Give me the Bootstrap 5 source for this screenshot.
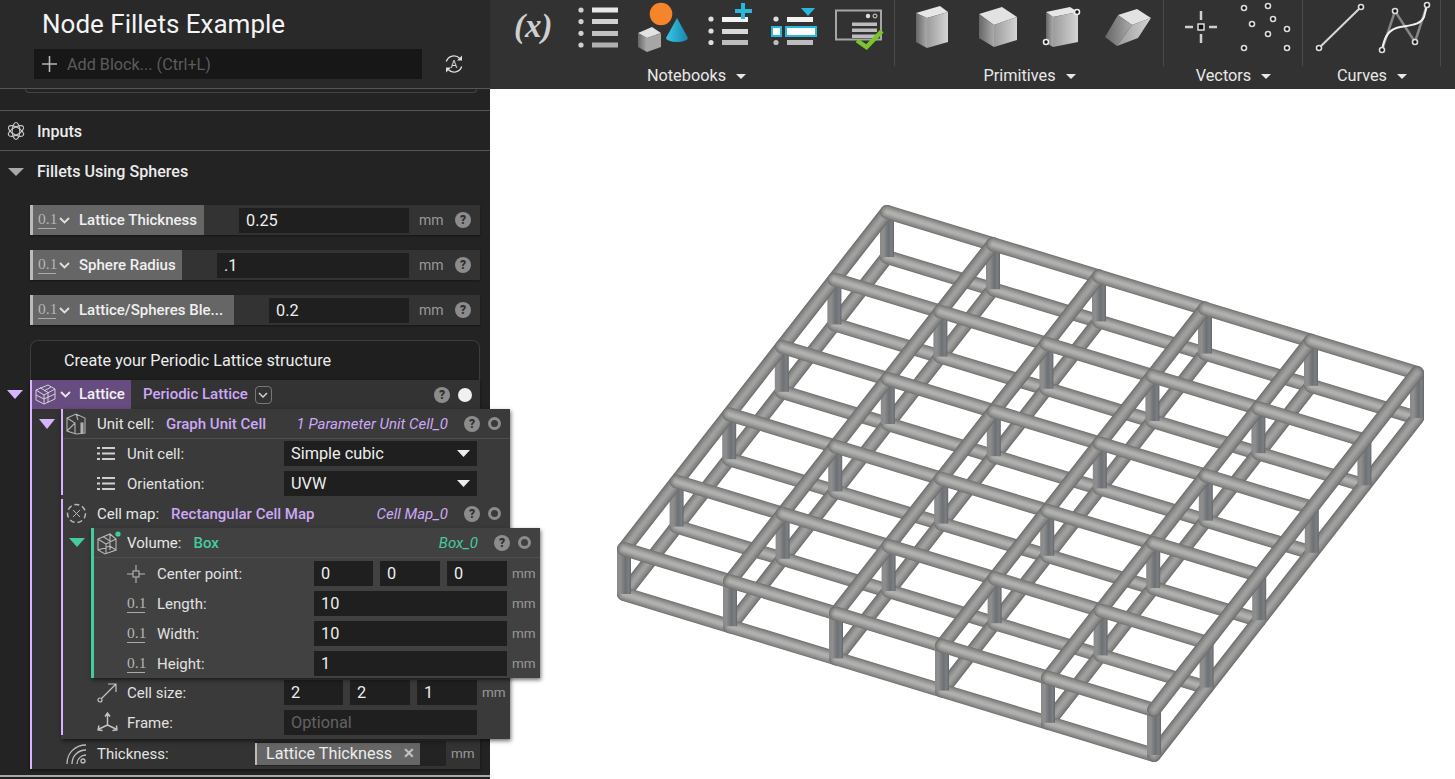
<!DOCTYPE html>
<html lang="en">
<head>
<meta charset="utf-8">
<title>Node Fillets Example</title>
<link href="https://cdn.jsdelivr.net/npm/bootstrap@5.3.0/dist/css/bootstrap.min.css" rel="stylesheet">
<style>
html,body{margin:0;height:100%;overflow:hidden;background:#fff}
body{font-family:Roboto,"Liberation Sans",sans-serif;font-size:15px;color:#e4e4e4}
svg{display:block;flex:none}
.shell{width:1455px;height:779px;overflow:hidden}
.lp{width:490px;height:779px;flex:none;background:#232323;position:relative;z-index:2}
.lp-top{height:88px;background:#292929;padding-left:34px}
.ttl{font-size:26px;line-height:30px;padding:9px 0 0 8px;margin:0;font-weight:400;color:#f4f4f4;height:49px}
.addrow{height:30px}
.addbox{width:388px;height:30px;background:#171717;color:#5c5c5c;font-size:16.2px;padding-left:8px;gap:10px}
.addtxt{padding-top:2px}
.aic{margin-left:22px}
.rulehead{height:4px;width:452px;margin-left:25px;border:1px solid #444;border-top:0;border-radius:0 0 7px 7px}
.rule{border-top:1px solid #555}
.r110{margin-top:17px}
.sec{height:39px;padding-left:7px;gap:12px;font-weight:500;color:#ececec;font-size:16.1px}
.sectxt{padding-top:4px}
.sec2{height:41px;padding-left:8px;gap:13px;font-weight:500;color:#ececec;font-size:16.1px}
.sec2txt{padding-top:1px}
.prow{margin-left:30px;width:450px;height:30px;background:#333;margin-bottom:15px;box-shadow:0 1px 2px rgba(0,0,0,.4)}
.first{margin-top:13px}
.chip{height:30px;background:#666;border-left:3px solid #bbb;padding:0 0 0 5px;font-weight:500;color:#f0f0f0;font-size:15px;white-space:nowrap;flex:none}
.cw174{width:174px}
.cw152{width:152px}
.cw204{width:204px}
.chiptxt{padding-top:1px}
.ozero{font-family:"Liberation Serif",serif;font-size:15.500px;line-height:16px;color:#b5b5b5;border-bottom:1px solid #aaa;width:18px;text-align:center;flex:none;padding-bottom:1px}
.chev{margin:0 5px 0 3px}
.fld{height:25px;background:#1f1f1f;color:#eee;padding-left:7px;font-size:16.3px;line-height:26px;flex:none}
.grow1{flex:1 1 0;margin-left:35px}
.mmtail{width:71px;flex:none;padding-left:10px;color:#999;font-size:14px;justify-content:space-between;padding-right:9px}
.qm{width:16px;height:16px;border-radius:50%;background:#8c8c8c;color:#2f2f2f;font-weight:900;font-size:12px;line-height:16px;text-align:center;flex:none}
.ring{width:13px;height:13px;border-radius:50%;border:3px solid #8c8c8c;flex:none}
.wdot{width:14px;height:14px;border-radius:50%;background:#f0f0f0;flex:none}
.noteb{margin-left:30px;width:450px;height:40px;background:#1f1f1f;border:1px solid #3c3c3c;border-bottom:0;border-radius:8px 8px 0 0;padding-left:33px;font-size:16.200px;color:#ededed;line-height:39px}
.nest{display:flex;align-items:flex-start}
.gut30{width:30px;flex:none;height:29px}
.gut29{width:29px;flex:none;height:29px}
.gut28{width:28px;flex:none;height:29px}
.latt{width:450px;height:389px;background:#333;border-left:2px solid #d8b4fe;box-shadow:0 1px 3px rgba(0,0,0,.5);flex:none}
.lhead{height:29px;padding-right:8px}
.lchip{height:29px;width:99px;background:#674c7f;padding-left:3px;font-weight:500;color:#f2f2f2;font-size:15px;flex:none}
.lilac{color:#cda8f6}
.mint{color:#45cc9d}
.pname{font-weight:500}
.iname{font-style:italic}
.pnudge{padding-top:2px}
.minibtn{width:17px;height:18px;border:1px solid #777;border-radius:4px;margin-left:7px}
.pnl{width:449px;flex:none;background:#3a3a3a;box-shadow:1px 2px 4px rgba(0,0,0,.55);position:relative;padding-bottom:4px}
.usec{height:86px;border-left:2px solid #d8b4fe;margin-bottom:4px}
.csec{height:236px;border-left:2px solid #d8b4fe}
.phead{height:29px;padding:0 9px 0 3px}
.hline{border-bottom:1px solid #4e4e4e;height:30px}
.hlab{margin-left:10px;color:#e6e6e6;padding-top:2px}
.hlab6{margin-left:6px}
.vol{background:#414141;padding-bottom:0}
.vsec{border-left:3px solid #45cc9d;height:150px}
.frow{height:25px;margin-top:5px;color:#e2e2e2}
.f1{margin-top:2px}
.f2{margin-top:3px}
.f3{margin-top:2px}
.pl34{padding-left:34px}
.pl33{padding-left:33px}
.ic30{width:30px;flex:none}
.ic31{width:31px;flex:none}
.lb157{width:157px;flex:none;padding-top:2px}
.w193{width:193px}
.w59{width:59px}
.w60{width:60px}
.gap7{gap:7px}
.mmx{color:#999;font-size:13.5px;margin-left:5px}
.dim{color:#626262}
.sel{justify-content:space-between;padding-right:7px}
.seltxt{padding-top:1px}
.thk{height:25px;margin-top:2px;padding-left:34px;color:#e2e2e2}
.lbthk{width:158px;flex:none;padding-top:2px}
.tk{width:191px;height:25px;background:#232323;flex:none}
.tchip{width:165px;height:22px;background:#666;border-left:2px solid #bbb;padding:0 5px 0 9px;color:#ececec;font-size:16.200px;justify-content:space-between}
.tchiptxt{padding-top:2px}
.xmark{color:#c4c4c4;font-weight:900;font-size:14px}
.lfoot{margin-top:6px;height:2px;background:#aaa}
.rp{min-width:0}
.tb{height:89px;background:#323232;color:#e8e8e8;flex:none}
.tg{height:89px;flex:none}
.tg1{width:405px}
.tg2{width:269px}
.tg3{width:139px}
.tg4{width:138px}
.ticons{height:66px;border-right:1px solid #4a4a4a}
.p15{padding-left:15px}
.p13{padding-left:13px}
.p11{padding-left:11px}
.p5{padding-left:5px}
.tlab{height:20px;font-size:16.300px;gap:10px;line-height:20px}
.nudge{margin-left:8px}
.view{background:#fff;flex:1 1 0}
.ftxt{font-family:"Liberation Serif",serif;font-style:italic;font-weight:700;font-size:33px}
.atxt{font-size:10.500px;font-family:Roboto,sans-serif}
</style>
</head>
<body>
<div class="shell d-flex">
  <aside class="lp">
    <div class="lp-top">
      <h1 class="ttl">Node Fillets Example</h1>
      <div class="addrow d-flex align-items-center">
        <div class="addbox d-flex align-items-center">
          <svg width="15" height="16" viewBox="0 0 15 16"><path d="M7.5 0v16M0 8h15" stroke="#b5b5b5" stroke-width="1.6"/></svg>
          <span class="addtxt">Add Block... (Ctrl+L)</span>
        </div>
        <svg class="aic" width="20" height="20" viewBox="0 0 20 20" fill="none" stroke="#dcdcdc" stroke-width="1.300"><path d="M2.300 7.500A8 8 0 0 1 15.800 4.500M17.700 12.500A8 8 0 0 1 4.200 15.500"/><path d="M18 1.500v5h-5zM2 18.500v-5h5z" fill="#dcdcdc" stroke="none"/><text x="10" y="13.800" text-anchor="middle" class="atxt" fill="#dcdcdc" stroke="none">A</text></svg>
      </div>
    </div>
    <div class="rule"></div>
    <div class="rulehead"></div>
    <div class="rule r110"></div>
    <div class="sec d-flex align-items-center">
      <svg width="18" height="20" viewBox="0 0 18 20" fill="none" stroke="#c8c8c8" stroke-width="1.1"><ellipse cx="9" cy="10" rx="8.500" ry="3.800" transform="rotate(30 9 10)"/><ellipse cx="9" cy="10" rx="8.500" ry="3.800" transform="rotate(90 9 10)"/><ellipse cx="9" cy="10" rx="8.500" ry="3.800" transform="rotate(150 9 10)"/></svg>
      <span class="sectxt">Inputs</span>
    </div>
    <div class="rule"></div>
    <div class="sec2 d-flex align-items-center">
      <svg width="16" height="8" viewBox="0 0 16 8"><path d="M0 0h16L8 8z" fill="#a9a9a9"/></svg>
      <span class="sec2txt">Fillets Using Spheres</span>
    </div>
    <div class="prow first d-flex align-items-center">
      <div class="chip cw174 d-flex align-items-center"><span class="ozero">0.1</span><svg class="chev" width="11" height="7" viewBox="0 0 11 7"><path d="M1 1l4.500 4.500L10 1" fill="none" stroke="#e0e0e0" stroke-width="1.800"/></svg><span class="ps-1 chiptxt">Lattice Thickness</span></div>
      <div class="fld grow1">0.25</div>
      <div class="mmtail d-flex align-items-center"><span>mm</span><span class="qm">?</span></div>
    </div>
    <div class="prow d-flex align-items-center">
      <div class="chip cw152 d-flex align-items-center"><span class="ozero">0.1</span><svg class="chev" width="11" height="7" viewBox="0 0 11 7"><path d="M1 1l4.500 4.500L10 1" fill="none" stroke="#e0e0e0" stroke-width="1.800"/></svg><span class="ps-1 chiptxt">Sphere Radius</span></div>
      <div class="fld grow1">.1</div>
      <div class="mmtail d-flex align-items-center"><span>mm</span><span class="qm">?</span></div>
    </div>
    <div class="prow d-flex align-items-center">
      <div class="chip cw204 d-flex align-items-center"><span class="ozero">0.1</span><svg class="chev" width="11" height="7" viewBox="0 0 11 7"><path d="M1 1l4.500 4.500L10 1" fill="none" stroke="#e0e0e0" stroke-width="1.800"/></svg><span class="ps-1 chiptxt">Lattice/Spheres Ble...</span></div>
      <div class="fld grow1">0.2</div>
      <div class="mmtail d-flex align-items-center"><span>mm</span><span class="qm">?</span></div>
    </div>
    <div class="noteb">Create your Periodic Lattice structure</div>
    <div class="nest">
      <div class="gut30 d-flex align-items-center justify-content-center"><svg width="16" height="9" viewBox="0 0 16 9"><path d="M0 0h16L8 9z" fill="#d8b4fe"/></svg></div>
      <div class="latt">
        <div class="lhead d-flex align-items-center">
          <div class="lchip d-flex align-items-center">
            <svg width="21" height="21" viewBox="0 0 21 21" fill="none" stroke="#d6d0dc" stroke-width="1"><path d="M1 6 13 1l7 4v10l-11 5-8-4zM1 6l8 5 11-6M9 11v9M5 3.500l8 5v10M16 3l-7 4M1 11l8 4 11-5"/></svg>
            <svg class="ms-1" width="11" height="7" viewBox="0 0 11 7"><path d="M1 1l4.500 4.500L10 1" fill="none" stroke="#e8e8e8" stroke-width="1.800"/></svg>
            <span class="ms-2">Lattice</span>
          </div>
          <span class="lilac pname ms-2 ps-1">Periodic Lattice</span>
          <div class="minibtn d-flex align-items-center justify-content-center"><svg width="10" height="6" viewBox="0 0 10 6"><path d="M1 1l4 4 4-4" fill="none" stroke="#d0d0d0" stroke-width="1.500"/></svg></div>
          <span class="qm ms-auto">?</span>
          <span class="wdot ms-2"></span>
        </div>
        <div class="nest">
          <div class="gut29 d-flex align-items-center justify-content-center"><svg width="16" height="10" viewBox="0 0 16 10"><path d="M0 0h16L8 10z" fill="#d8b4fe"/></svg></div>
          <div class="pnl">
            <div class="usec">
              <div class="phead hline d-flex align-items-center">
                <svg width="21" height="22" viewBox="0 0 21 22" fill="none" stroke="#b0b0b0" stroke-width="1.100"><path d="M1 5l9-4 9 4v15l-9 1-9-3zM1 5l8 5v11M10 1l2 6M1 18l8-8"/><path d="M15 10h2v10h-2z" fill="#b0b0b0"/></svg>
                <span class="hlab">Unit cell:</span>
                <span class="lilac pname pnudge ms-2 ps-1">Graph Unit Cell</span>
                <span class="lilac iname pnudge ms-auto">1 Parameter Unit Cell_0</span>
                <span class="qm ms-3">?</span>
                <span class="ring ms-2"></span>
              </div>
              <div class="frow f1 d-flex align-items-center pl34">
                <div class="ic30"><svg width="18" height="13" viewBox="0 0 18 13" fill="#cfcfcf"><path d="M0 0h3v2H0zM5 0h13v2H5zM0 5.500h3v2H0zM5 5.500h13v2H5zM0 11h3v2H0zM5 11h13v2H5z"/></svg></div>
                <div class="lb157">Unit cell:</div>
                <div class="fld w193 d-flex align-items-center sel"><span class="seltxt">Simple cubic</span><svg width="13" height="7" viewBox="0 0 13 7"><path d="M0 0h13L6.500 7z" fill="#eee"/></svg></div>
              </div>
              <div class="frow d-flex align-items-center pl34">
                <div class="ic30"><svg width="18" height="13" viewBox="0 0 18 13" fill="#cfcfcf"><path d="M0 0h3v2H0zM5 0h13v2H5zM0 5.500h3v2H0zM5 5.500h13v2H5zM0 11h3v2H0zM5 11h13v2H5z"/></svg></div>
                <div class="lb157">Orientation:</div>
                <div class="fld w193 d-flex align-items-center sel"><span class="seltxt">UVW</span><svg width="13" height="7" viewBox="0 0 13 7"><path d="M0 0h13L6.500 7z" fill="#eee"/></svg></div>
              </div>
            </div>
            <div class="csec">
              <div class="phead d-flex align-items-center">
                <svg width="21" height="21" viewBox="0 0 21 21" fill="none" stroke="#b8b8b8" stroke-width="1.500" stroke-dasharray="5 3"><circle cx="10.500" cy="10.500" r="9"/><path d="M7 7l7 7M14 7l-7 7" stroke-dasharray="none" stroke-width="1"/></svg>
                <span class="hlab">Cell map:</span>
                <span class="lilac pname pnudge ms-2 ps-1">Rectangular Cell Map</span>
                <span class="lilac iname pnudge ms-auto">Cell Map_0</span>
                <span class="qm ms-3">?</span>
                <span class="ring ms-2"></span>
              </div>
              <div class="nest">
                <div class="gut28 d-flex align-items-center justify-content-center"><svg width="16" height="9" viewBox="0 0 16 9"><path d="M0 0h16L8 9z" fill="#45cc9d"/></svg></div>
                <div class="pnl vol">
                  <div class="vsec">
                    <div class="phead hline d-flex align-items-center">
                      <svg width="24" height="24" viewBox="0 0 24 24" fill="none" stroke="#b8b8b8" stroke-width="1.100"><path d="M1 8l12-5 6 5v11l-11 4-7-4zM1 8l8 5v10M9 13l10-5M6 5.500l7 4.500v9M13 3v9M1 19l12-4 6 4"/><circle cx="21" cy="3" r="2.600" fill="#45cc9d" stroke="none"/></svg>
                      <span class="hlab hlab6">Volume:</span>
                      <span class="mint pname pnudge ms-2 ps-1">Box</span>
                      <span class="mint iname pnudge ms-auto">Box_0</span>
                      <span class="qm ms-3">?</span>
                      <span class="ring ms-2"></span>
                    </div>
                    <div class="frow f2 d-flex align-items-center pl33">
                      <div class="ic30"><svg width="18" height="18" viewBox="0 0 18 18" fill="none" stroke="#b5b5b5" stroke-width="1.100"><path d="M0 9h6M12 9h6M9 0v6M9 12v6"/><rect x="6" y="6" width="6" height="6"/></svg></div>
                      <div class="lb157">Center point:</div>
                      <div class="d-flex gap7"><div class="fld w59">0</div><div class="fld w60">0</div><div class="fld w60">0</div></div>
                      <span class="mmx">mm</span>
                    </div>
                    <div class="frow d-flex align-items-center pl33">
                      <div class="ic30"><span class="ozero d-block">0.1</span></div>
                      <div class="lb157">Length:</div>
                      <div class="fld w193">10</div>
                      <span class="mmx">mm</span>
                    </div>
                    <div class="frow d-flex align-items-center pl33">
                      <div class="ic30"><span class="ozero d-block">0.1</span></div>
                      <div class="lb157">Width:</div>
                      <div class="fld w193">10</div>
                      <span class="mmx">mm</span>
                    </div>
                    <div class="frow d-flex align-items-center pl33">
                      <div class="ic30"><span class="ozero d-block">0.1</span></div>
                      <div class="lb157">Height:</div>
                      <div class="fld w193">1</div>
                      <span class="mmx">mm</span>
                    </div>
                  </div>
                </div>
              </div>
              <div class="frow f3 d-flex align-items-center pl34">
                <div class="ic30"><svg width="20" height="20" viewBox="0 0 20 20" fill="none" stroke="#c4c4c4" stroke-width="1.200"><circle cx="3" cy="17" r="2"/><path d="M4.500 15.500 19 1M11 1h8v8"/></svg></div>
                <div class="lb157">Cell size:</div>
                <div class="d-flex gap7"><div class="fld w59">2</div><div class="fld w60">2</div><div class="fld w60">1</div></div>
                <span class="mmx">mm</span>
              </div>
              <div class="frow d-flex align-items-center pl34">
                <div class="ic30"><svg width="21" height="21" viewBox="0 0 21 21" fill="none" stroke="#c4c4c4" stroke-width="1.400"><path d="M10.500 13V2M10.500 13 2 17M10.500 13 19 17M8 4.500 10.500 1 13 4.500M2 13.500 1 18l4.500.5M19.500 13.500l.5 4.500-4.500.5"/></svg></div>
                <div class="lb157">Frame:</div>
                <div class="fld w193 dim">Optional</div>
              </div>
            </div>
          </div>
        </div>
        <div class="thk d-flex align-items-center">
          <div class="ic31 d-flex"><svg width="21" height="21" viewBox="0 0 21 21" fill="none" stroke="#bdbdbd" stroke-width="1.300"><path d="M1 21C1 10 9 2 20 2M6 21C6 13 12 7 20 7M11 21c0-5 4-9 9-9"/><circle cx="17" cy="18" r="2"/></svg></div>
          <div class="lbthk">Thickness:</div>
          <div class="tk d-flex align-items-center"><div class="tchip d-flex align-items-center"><span class="tchiptxt">Lattice Thickness</span><span class="xmark">✕</span></div></div>
          <span class="mmx">mm</span>
        </div>
      </div>
    </div>
    <div class="lfoot"></div>
  </aside>
  <div class="rp flex-grow-1 d-flex flex-column">
    <div class="tb d-flex">
      <section class="tg tg1 d-flex flex-column">
        <div class="ticons d-flex p15">
          <svg width="60" height="54" viewBox="505 0 60 54"><text x="514" y="37" class="ftxt" fill="#cfcfcf">(x)</text></svg>
          <svg width="63" height="54" viewBox="565 0 63 54"><g fill="#d0d0d0"><circle cx="581" cy="10" r="2.600"/><circle cx="581" cy="21.600" r="2.600"/><circle cx="581" cy="33.300" r="2.600"/><circle cx="581" cy="45" r="2.600"/></g><rect x="592" y="7.500" width="26" height="5" fill="#e8e8e8"/><rect x="592" y="19" width="26" height="5" fill="#d2d2d2"/><rect x="592" y="31" width="26" height="5" fill="#c0c0c0"/><rect x="592" y="42.500" width="26" height="5" fill="#b0b0b0"/></svg>
          <svg width="70" height="54" viewBox="628 0 70 54"><defs><linearGradient id="cone" x1="0" x2="1"><stop offset="0" stop-color="#38c8ea"/><stop offset="1" stop-color="#1a84aa"/></linearGradient><linearGradient id="gl" x1="0" x2="1"><stop offset="0" stop-color="#666"/><stop offset="1" stop-color="#aaa"/></linearGradient><linearGradient id="gr" x1="0" x2="1"><stop offset="0" stop-color="#9c9c9c"/><stop offset="1" stop-color="#d4d4d4"/></linearGradient></defs><circle cx="661" cy="14" r="11.300" fill="#f5842a"/><path d="M677 18 666 38a11 4 0 0 0 22 0z" fill="url(#cone)"/><path d="M638 33 652 27 661 33 647 38z" fill="#e2e2e2"/><path d="M638 33 647 38V52L638 47z" fill="url(#gl)"/><path d="M647 38 661 33V47L647 52z" fill="#a6a6a6"/></svg>
          <svg width="64" height="54" viewBox="698 0 64 54"><g fill="#dedede"><circle cx="711" cy="19" r="2.600"/><circle cx="711" cy="31" r="2.600"/><circle cx="711" cy="42.500" r="2.600"/></g><rect x="722" y="17" width="26" height="5" fill="#f2f2f2"/><rect x="722" y="29" width="26" height="5" fill="#d8d8d8"/><rect x="722" y="40" width="26" height="5" fill="#bdbdbd"/><path d="M741 3h4v6h7v4h-7v6h-4v-6h-6v-4h6z" fill="#28b8dc"/></svg>
          <svg width="64" height="54" viewBox="762 0 64 54"><path d="M801 8h14l-7 8z" fill="#28b8dc"/><circle cx="776" cy="19" r="2.600" fill="#dedede"/><circle cx="776" cy="42.500" r="2.600" fill="#bdbdbd"/><rect x="787" y="17" width="26" height="5" fill="#f2f2f2"/><rect x="787" y="40" width="26" height="5" fill="#bdbdbd"/><rect x="772" y="27" width="9" height="9" fill="#fff" stroke="#28b8dc" stroke-width="2"/><rect x="786" y="27" width="30" height="9" fill="#fff" stroke="#28b8dc" stroke-width="2"/></svg>
          <svg width="64" height="54" viewBox="826 0 64 54"><rect x="836" y="10.500" width="45" height="29" fill="none" stroke="#a6a6a6" stroke-width="2"/><circle cx="868" cy="16" r="2.200" fill="#ddd"/><circle cx="875" cy="16" r="2" fill="none" stroke="#ddd"/><g fill="#bcbcbc"><rect x="852" y="22.500" width="25" height="3.500"/><rect x="852" y="28.500" width="25" height="3.500"/><rect x="852" y="34.500" width="25" height="3.500"/></g><path d="M857 40.500 866.500 47 882 31" fill="none" stroke="#7cc42c" stroke-width="4.500"/></svg>
        </div>
        <div class="tlab d-flex align-items-center justify-content-center nudge"><span>Notebooks</span><svg width="10" height="5" viewBox="0 0 10 5"><path d="M0 0h10L5 5z" fill="#e8e8e8"/></svg></div>
      </section>
      <section class="tg tg2 d-flex flex-column">
        <div class="ticons d-flex p13">
          <svg width="60" height="54" viewBox="908 0 60 54"><path d="M916 13 940 6 948 12 927 18z" fill="#e6e6e6"/><path d="M916 13 927 18V48L916 42z" fill="url(#gl)"/><path d="M927 18 948 12V42L927 48z" fill="url(#gr)"/></svg>
          <svg width="62" height="54" viewBox="968 0 62 54"><path d="M979 14 1002 7 1017 17 994 25z" fill="#e2e2e2"/><path d="M979 14 994 25V47L979 38z" fill="url(#gl)"/><path d="M994 25 1017 17V40L994 47z" fill="url(#gr)"/></svg>
          <svg width="62" height="54" viewBox="1030 0 62 54"><path d="M1046 12 1070 7 1078 12 1053 17z" fill="#e6e6e6"/><path d="M1046 12 1053 17V47L1046 43z" fill="url(#gl)"/><path d="M1053 17 1078 12V42L1053 47z" fill="url(#gr)"/><g fill="#111" stroke="#eee" stroke-width="1.600"><circle cx="1077" cy="12" r="2.500"/><circle cx="1046" cy="42" r="2.500"/></g></svg>
          <svg width="68" height="54" viewBox="1092 0 68 54"><path d="M1118 15 1137 9 1151 18 1132 25z" fill="#e2e2e2"/><path d="M1105 37 1118 15 1132 25 1117 46z" fill="url(#gl)"/><path d="M1132 25 1151 18 1138 38 1117 46z" fill="url(#gr)"/></svg>
        </div>
        <div class="tlab d-flex align-items-center justify-content-center"><span>Primitives</span><svg width="10" height="5" viewBox="0 0 10 5"><path d="M0 0h10L5 5z" fill="#e8e8e8"/></svg></div>
      </section>
      <section class="tg tg3 d-flex flex-column">
        <div class="ticons d-flex p11">
          <svg width="53" height="54" viewBox="1175 0 53 54"><path d="M1185 27h8M1209 27h8M1201 11v9M1201 34v9" stroke="#cfcfcf" stroke-width="2.500"/><rect x="1198" y="24" width="6" height="6" fill="#111" stroke="#e8e8e8" stroke-width="1.400"/></svg>
          <svg width="70" height="54" viewBox="1228 0 70 54"><g fill="#111" stroke="#ddd" stroke-width="1.600"><circle cx="1244" cy="8" r="2.500"/><circle cx="1268" cy="6" r="2.500"/><circle cx="1273" cy="19" r="2.500"/><circle cx="1252" cy="24" r="2.500"/><circle cx="1287" cy="29" r="2.500"/><circle cx="1268" cy="34" r="2.500"/><circle cx="1244" cy="48" r="2.500"/><circle cx="1287" cy="48" r="2.500"/></g></svg>
        </div>
        <div class="tlab d-flex align-items-center justify-content-center"><span>Vectors</span><svg width="10" height="5" viewBox="0 0 10 5"><path d="M0 0h10L5 5z" fill="#e8e8e8"/></svg></div>
      </section>
      <section class="tg tg4 d-flex flex-column">
        <div class="ticons d-flex p5">
          <svg width="64" height="54" viewBox="1308 0 64 54"><path d="M1319 48 1361 7" stroke="#d8d8d8" stroke-width="2"/><g fill="#111" stroke="#ddd" stroke-width="1.600"><circle cx="1319" cy="48" r="2.500"/><circle cx="1361" cy="7" r="2.500"/></g></svg>
          <svg width="64" height="54" viewBox="1372 0 64 54"><path d="M1382 50 1395 11 1415 42 1427 5" fill="none" stroke="#858585" stroke-width="2.500"/><path d="M1382 50C1385 34 1390 29 1400 27 1412 25 1420 25 1424 17L1427 5" fill="none" stroke="#f0f0f0" stroke-width="2"/><g fill="#111" stroke="#ddd" stroke-width="1.600"><circle cx="1382" cy="50" r="2.500"/><circle cx="1395" cy="11" r="2.500"/><circle cx="1415" cy="42" r="2.500"/><circle cx="1427" cy="5" r="2.500"/></g></svg>
        </div>
        <div class="tlab d-flex align-items-center justify-content-center"><span>Curves</span><svg width="10" height="5" viewBox="0 0 10 5"><path d="M0 0h10L5 5z" fill="#e8e8e8"/></svg></div>
      </section>
    </div>
    <div class="view">
      <svg id="lat" width="965" height="690" viewBox="490 89 965 690" aria-label="Lattice model"><defs><linearGradient id="post" x1="0" x2="1"><stop offset="0" stop-color="#8a8a8a"/><stop offset=".25" stop-color="#8e8e8e"/><stop offset=".6" stop-color="#6d7175"/><stop offset=".85" stop-color="#7c7f82"/><stop offset="1" stop-color="#62656a"/></linearGradient></defs></svg>
    </div>
  </div>
</div>
<script src="https://cdn.jsdelivr.net/npm/bootstrap@5.3.0/dist/js/bootstrap.bundle.min.js"></script>
<script>
(function(){
  var svg=document.getElementById('lat'),NS='http://www.w3.org/2000/svg';
  var B=[887,212],R=[1417,373],L=[624,549],H=45,N=5;
  function P(i,j,h){return [B[0]+i/N*(R[0]-B[0])+j/N*(L[0]-B[0]),B[1]+i/N*(R[1]-B[1])+j/N*(L[1]-B[1])+h];}
  var US=[[14,'#737373'],[12.5,'#80807f'],[10.5,'#8d8d8b'],[8,'#9a9a98'],[5.5,'#a6a6a4'],[3,'#b0b0ae']];
  var VS=[[14,'#6e6e6e'],[12.5,'#797979'],[10.5,'#858585'],[8,'#8f8f8e'],[5.5,'#989897'],[3,'#a0a09f']];
  function stroke(d,st){st.forEach(function(s){var p=document.createElementNS(NS,'path');p.setAttribute('d',d);p.setAttribute('fill','none');p.setAttribute('stroke',s[1]);p.setAttribute('stroke-width',s[0]);p.setAttribute('stroke-linecap','round');svg.appendChild(p);});}
  function layer(h){
    for(var i=0;i<=N;i++){
      var a=P(i,0,h),b=P(i,N,h);
      stroke('M'+a+'L'+b,VS);
      if(i<N){var d='';for(var j=0;j<=N;j++){var c=P(i,j,h),e=P(i+1,j,h);d+='M'+c+'L'+e;}stroke(d,US);}
    }
  }
  layer(H);
  for(var j=0;j<=N;j++)for(var i=0;i<=N;i++){
    var p=P(i,j,0),r=document.createElementNS(NS,'rect');
    r.setAttribute('x',p[0]-7);r.setAttribute('y',p[1]);r.setAttribute('width',14);r.setAttribute('height',H);r.setAttribute('fill','url(#post)');svg.appendChild(r);
  }
  layer(0);
})();
</script>
</body>
</html>
